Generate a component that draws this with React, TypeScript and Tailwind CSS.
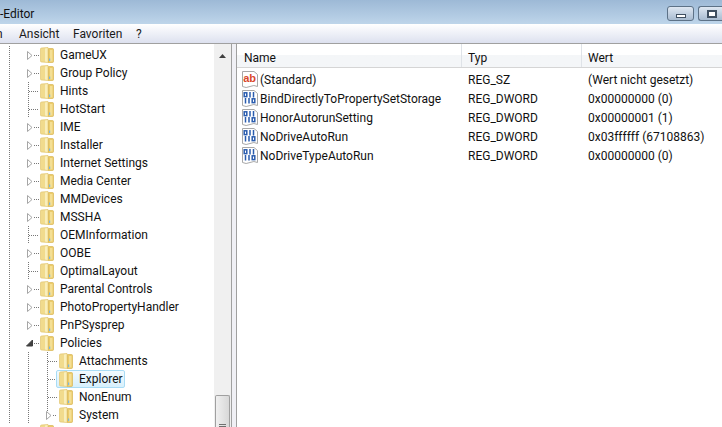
import React from 'react';

const font = { fontFamily: 'Roboto, "Noto Sans", sans-serif' };

type TreeRow = { label: string; level: 1 | 2; expander?: 'closed' | 'open'; selected?: boolean; last?: boolean };

const rows: TreeRow[] = [
  { label: 'GameUX', level: 1, expander: 'closed' },
  { label: 'Group Policy', level: 1, expander: 'closed' },
  { label: 'Hints', level: 1 },
  { label: 'HotStart', level: 1 },
  { label: 'IME', level: 1, expander: 'closed' },
  { label: 'Installer', level: 1, expander: 'closed' },
  { label: 'Internet Settings', level: 1, expander: 'closed' },
  { label: 'Media Center', level: 1, expander: 'closed' },
  { label: 'MMDevices', level: 1, expander: 'closed' },
  { label: 'MSSHA', level: 1, expander: 'closed' },
  { label: 'OEMInformation', level: 1 },
  { label: 'OOBE', level: 1, expander: 'closed' },
  { label: 'OptimalLayout', level: 1 },
  { label: 'Parental Controls', level: 1, expander: 'closed' },
  { label: 'PhotoPropertyHandler', level: 1, expander: 'closed' },
  { label: 'PnPSysprep', level: 1, expander: 'closed' },
  { label: 'Policies', level: 1, expander: 'open' },
  { label: 'Attachments', level: 2 },
  { label: 'Explorer', level: 2, selected: true },
  { label: 'NonEnum', level: 2 },
  { label: 'System', level: 2, expander: 'closed', last: true },
];

const values = [
  { name: '(Standard)', type: 'REG_SZ', value: '(Wert nicht gesetzt)', icon: 'sz' },
  { name: 'BindDirectlyToPropertySetStorage', type: 'REG_DWORD', value: '0x00000000 (0)', icon: 'bin' },
  { name: 'HonorAutorunSetting', type: 'REG_DWORD', value: '0x00000001 (1)', icon: 'bin' },
  { name: 'NoDriveAutoRun', type: 'REG_DWORD', value: '0x03ffffff (67108863)', icon: 'bin' },
  { name: 'NoDriveTypeAutoRun', type: 'REG_DWORD', value: '0x00000000 (0)', icon: 'bin' },
];

const Folder = () => (
  <svg width="14" height="16" viewBox="0 0 14 16" className="shrink-0">
    <path d="M0.5 2 Q0.5 1 1.5 1 L8 0.5 L8.5 15.5 L1.5 15 Q0.5 15 0.5 14 Z" fill="#f1db8d" stroke="#e2c671" strokeWidth="0.7" />
    <path d="M8.5 1.5 L12.5 1.5 Q13.5 1.5 13.5 2.5 L13.5 14.5 Q13.5 15.5 12.5 15.5 L8.5 15.5 Z" fill="#eccb68" stroke="#d9b654" strokeWidth="0.7" />
    <path d="M5 1.5 L7.5 1 L7.5 15 L5 14.5 Z" fill="#f9eebb" />
    <path d="M10 3 L12.5 3 L12.5 14.5 L10 14.5 Z" fill="#f4df95" />
    <rect x="9" y="11.5" width="1.2" height="2.5" fill="#7ab8e2" />
  </svg>
);

// guide lines + expander for one tree row
const Guides = ({ row }: { row: TreeRow }) => (
  <svg width="57" height="18" viewBox="0 0 57 18" className="shrink-0">
    <line x1="9.5" y1="0" x2="9.5" y2="18" stroke="#777" strokeDasharray="1 1" />
    {row.level === 1 && (
      <>
        {!row.expander && <line x1="28.5" y1="0" x2="28.5" y2="18" stroke="#777" strokeDasharray="1 1" />}
        <line x1={row.expander ? 34 : 29} y1="9.5" x2="39" y2="9.5" stroke="#777" strokeDasharray="1 1" />
        {row.expander === 'closed' && <path d="M27.5 5.5 L27.5 13.5 L32 9.5 Z" fill="#fff" stroke="#a6a6a6" />}
        {row.expander === 'open' && <path d="M32.5 6 L32.5 12 L26.5 12 Z" fill="#404040" stroke="#404040" />}
      </>
    )}
    {row.level === 2 && (
      <>
        <line x1="28.5" y1="0" x2="28.5" y2="18" stroke="#777" strokeDasharray="1 1" />
        <line x1="47.5" y1="0" x2="47.5" y2={row.expander ? 5 : row.last ? 9 : 18} stroke="#777" strokeDasharray="1 1" />
        <line x1={row.expander ? 53 : 48} y1="9.5" x2="57" y2="9.5" stroke="#777" strokeDasharray="1 1" />
        {row.expander === 'closed' && <path d="M46.5 5.5 L46.5 13.5 L51 9.5 Z" fill="#fff" stroke="#a6a6a6" />}
      </>
    )}
  </svg>
);

const SzIcon = () => (
  <svg width="16" height="17" viewBox="0 0 16 17" className="shrink-0">
    <path d="M0.5 0.5 H12 L15.5 3.5 V15.5 Q12 13.5 8 15.5 T0.5 15.5 Z" fill="#fff" stroke="#a8a8a8" />
    <text x="1.2" y="10.5" fontSize="11" fontWeight="700" fill="#d9472b" fontFamily="Liberation Sans, sans-serif">ab</text>
  </svg>
);

const BinIcon = () => (
  <svg width="16" height="17" viewBox="0 0 16 17" className="shrink-0">
    <path d="M0.5 0.5 H12 L15.5 3.5 V15.5 Q12 13.5 8 15.5 T0.5 15.5 Z" fill="#fff" stroke="#a8a8a8" />
    <g fill="none" stroke="#2a5cae" strokeWidth="1.5">
      <rect x="2.2" y="2.8" width="2.6" height="3.8" />
      <rect x="10.2" y="8.8" width="2.6" height="3.8" />
      <path d="M8 2 V7.4 M11.5 2 V7.4 M3.5 8 V13.4 M7 8 V13.4" />
    </g>
  </svg>
);

export default function App() {
  return (
    <div className="w-[722px] h-[427px] overflow-hidden flex flex-col text-[12px] text-[#111]" style={font}>
      {/* title bar */}
      <div className="h-6 shrink-0 flex items-start justify-between bg-gradient-to-b from-[#9db9d6] to-[#bed5ea]">
        <span className="leading-[28px] text-[#111]">-Editor</span>
        <div className="flex gap-1 pt-1.5 -mr-[1px]">
          <div className="w-[27px] h-[15px] rounded-[3px] border border-[#5d7287] bg-gradient-to-b from-[#dfe8f2] to-[#a8bbd0] flex items-center justify-center pt-1">
            <div className="w-[10px] h-[4px] border border-[#3f4f60] bg-white" />
          </div>
          <div className="w-[25px] h-[15px] rounded-l-[3px] border border-r-0 border-[#5d7287] bg-gradient-to-b from-[#dfe8f2] to-[#a8bbd0] flex items-center pl-2">
            <div className="w-[10px] h-[8px] border-2 border-[#3f4f60] bg-white" />
          </div>
        </div>
      </div>

      {/* menu */}
      <div className="h-5 shrink-0 flex items-center bg-gradient-to-b from-white to-[#dde1ef] border-b border-[#a0a0a0] text-[#1a1a1a]">
        <span className="-ml-[4px] w-[23px]">n</span>
        <span className="w-[54px]">Ansicht</span>
        <span className="w-[63px]">Favoriten</span>
        <span>?</span>
      </div>

      <div className="flex-1 min-h-0 flex bg-[#f0f0f5]">
        {/* tree pane */}
        <div className="w-[232px] shrink-0 flex bg-white border-r border-[#a0a0a0] overflow-hidden">
          <div className="w-[214px] shrink-0 pt-[2px] overflow-hidden">
            {rows.map((row) => (
              <div key={row.label} className="h-[18px] flex items-center">
                <Guides row={row} />
                {row.level === 1 ? (
                  <div className="-ml-[17px] flex items-center gap-[6px]">
                    <Folder />
                    <span className="whitespace-nowrap">{row.label}</span>
                  </div>
                ) : (
                  <div className={`-ml-[1px] pl-[2px] pr-[1px] h-[18px] flex items-center gap-[6px] rounded-[2px] border ${row.selected ? 'border-[#a9dcf5] bg-gradient-to-b from-[#f2fafe] to-[#d7f0fc]' : 'border-transparent'}`}>
                    <Folder />
                    <span className="whitespace-nowrap">{row.label}</span>
                  </div>
                )}
              </div>
            ))}
            <div className="h-[18px] flex">
              <div className="ml-[40px]"><Folder /></div>
            </div>
          </div>
          {/* scrollbar */}
          <div className="w-[17px] shrink-0 bg-[#f0f0f0] flex flex-col justify-between pt-[9px]">
            <svg width="17" height="5" viewBox="0 0 17 5"><path d="M5 5 L8.5 1 L12 5 Z" fill="#404040" /></svg>
            <div className="w-[15px] h-[32px] mx-auto rounded-t-[2px] border border-b-0 border-[#a0a0a0] bg-gradient-to-r from-[#f0f0f0] to-[#d8d8d8] flex flex-col justify-end items-center gap-[1px]">
              <div className="w-[7px] h-px bg-[#707070]" />
              <div className="w-[7px] h-px bg-[#707070]" />
            </div>
          </div>
        </div>

        <div className="w-1 shrink-0" />

        {/* value list */}
        <div className="flex-1 bg-white border-l border-[#a0a0a0] flex flex-col">
          <div className="h-[24px] shrink-0 flex bg-gradient-to-b from-white from-50% to-[#f4f6f8] to-50% border-b border-[#d5d5d5]">
            <div className="w-[225px] pl-[7px] pt-[4px] flex items-center border-r border-[#dfe3e8]">Name</div>
            <div className="w-[120px] pl-[6px] pt-[4px] flex items-center border-r border-[#dfe3e8]">Typ</div>
            <div className="pl-[6px] pt-[4px] flex items-center">Wert</div>
          </div>
          <div className="pt-[2px]">
            {values.map((v) => (
              <div key={v.name} className="h-[19px] flex items-center">
                <div className="w-[225px] pl-[5px] flex items-center gap-[2px] whitespace-nowrap">
                  {v.icon === 'sz' ? <SzIcon /> : <BinIcon />}
                  <span>{v.name}</span>
                </div>
                <div className="w-[120px] pl-[6px]">{v.type}</div>
                <div className="pl-[6px] whitespace-nowrap">{v.value}</div>
              </div>
            ))}
          </div>
        </div>
      </div>
    </div>
  );
}
